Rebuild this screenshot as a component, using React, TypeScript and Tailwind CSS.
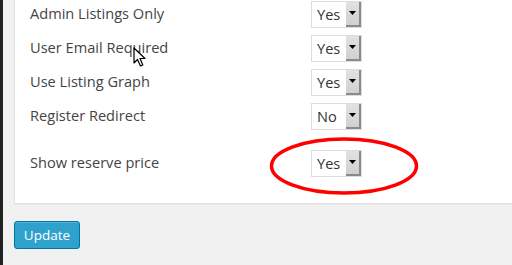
import React from "react";

function Select({ value }: { value: string }) {
  return (
    <div className="flex h-[27px] w-[51px] border border-[#dddddd] bg-white">
      <div className="flex flex-1 items-center pl-[5px] text-[14.6px] leading-none text-[#333333]">{value}</div>
      <div className="flex w-[15px] items-center justify-center border-r-2 border-b-2 border-[#8a8a8a] bg-gradient-to-b from-[#e2e2e2] to-[#d0d0d0]">
        <svg width="7" height="4" viewBox="0 0 7 4">
          <polygon points="0,0 7,0 3.5,4" fill="#000" />
        </svg>
      </div>
    </div>
  );
}

function Row({ label, value }: { label: string; value: string }) {
  return (
    <div className="flex h-[34px] items-center">
      <div className="w-[281px] text-[14.6px] text-[#444444]">{label}</div>
      <Select value={value} />
    </div>
  );
}

export default function App() {
  return (
    <div
      className="relative flex h-[265px] w-[512px] overflow-hidden bg-[#f1f1f1]"
      style={{ fontFamily: '"Open Sans", "Liberation Sans", sans-serif' }}
    >
      <div className="w-[3px] shrink-0 bg-[#222222]" />
      <div className="flex flex-1 flex-col pl-[11px]">
        <div className="-mt-[3px] flex h-[207px] flex-col border-l border-b border-[#e2e2e2] bg-white pl-[15px] shadow-[0_1px_1px_rgba(0,0,0,0.04)]">
          <Row label="Admin Listings Only" value="Yes" />
          <Row label="User Email Required" value="Yes" />
          <Row label="Use Listing Graph" value="Yes" />
          <Row label="Register Redirect" value="No" />
          <div className="h-[13px]" />
          <Row label="Show reserve price" value="Yes" />
        </div>
        <div className="mt-[17px]">
          <button className="h-[28px] w-[66px] rounded-[3px] border border-[#0074a2] bg-[#2ea2cc] text-[13.5px] text-white shadow-[inset_0_1px_0_rgba(120,200,230,0.5)]">
            Update
          </button>
        </div>
      </div>
      <svg className="absolute left-0 top-0" width="512" height="265" pointerEvents="none">
        <ellipse cx="344" cy="166" rx="72.5" ry="27" fill="none" stroke="#ff0000" strokeWidth="3.5" />
        <path
          d="M134 48 L134 63 L137.5 59.5 L140.5 66 L142.8 65 L140 58.5 L145 58.5 Z"
          fill="#fff"
          stroke="#000"
          strokeWidth="1.2"
          strokeLinejoin="round"
        />
      </svg>
    </div>
  );
}
